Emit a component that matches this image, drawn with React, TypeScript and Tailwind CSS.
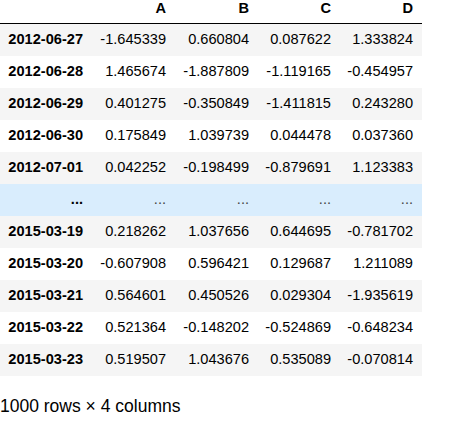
import React from "react";

const rows: [string, string[]][] = [
  ["2012-06-27", ["-1.645339", "0.660804", "0.087622", "1.333824"]],
  ["2012-06-28", ["1.465674", "-1.887809", "-1.119165", "-0.454957"]],
  ["2012-06-29", ["0.401275", "-0.350849", "-1.411815", "0.243280"]],
  ["2012-06-30", ["0.175849", "1.039739", "0.044478", "0.037360"]],
  ["2012-07-01", ["0.042252", "-0.198499", "-0.879691", "1.123383"]],
  ["...", ["...", "...", "...", "..."]],
  ["2015-03-19", ["0.218262", "1.037656", "0.644695", "-0.781702"]],
  ["2015-03-20", ["-0.607908", "0.596421", "0.129687", "1.211089"]],
  ["2015-03-21", ["0.564601", "0.450526", "0.029304", "-1.935619"]],
  ["2015-03-22", ["0.521364", "-0.148202", "-0.524869", "-0.648234"]],
  ["2015-03-23", ["0.519507", "1.043676", "0.535089", "-0.070814"]],
];

export default function App() {
  return (
    <div
      className="w-[454px] h-[424px] bg-white text-black text-[14.6px] overflow-hidden"
      style={{ fontFamily: '"Liberation Sans", Arial, sans-serif' }}
    >
      <table className="table-fixed border-collapse w-[422px]">
        <colgroup>
          <col className="w-[92px]" />
          <col className="w-[83px]" />
          <col className="w-[83px]" />
          <col className="w-[82px]" />
          <col className="w-[82px]" />
        </colgroup>
        <thead>
          <tr className="border-b border-black">
            <th className="h-[23px] p-0 pr-[9px] pb-[6px] leading-[17px] align-bottom text-right font-bold"></th>
            {["A", "B", "C", "D"].map((h) => (
              <th
                key={h}
                className="h-[23px] p-0 pr-[9px] pb-[6px] leading-[17px] align-bottom text-right font-bold"
              >
                {h}
              </th>
            ))}
          </tr>
        </thead>
        <tbody>
          {rows.map(([idx, vals], i) => {
            const bg =
              idx === "..."
                ? "bg-[#d9edfd]"
                : i % 2 === 0
                ? "bg-[#f5f5f5]"
                : "bg-white";
            return (
              <tr key={i} className={bg}>
                <th className="h-[32px] p-0 pr-[9px] leading-[17px] text-right font-bold align-middle">
                  {idx}
                </th>
                {vals.map((v, j) => (
                  <td
                    key={j}
                    className={
                      "h-[32px] p-0 pr-[9px] leading-[17px] text-right align-middle " +
                      (idx === "..." ? "text-[#444]" : "")
                    }
                  >
                    {v}
                  </td>
                ))}
              </tr>
            );
          })}
        </tbody>
      </table>
      <p className="mt-[20px] text-[17.5px] leading-[20px]">1000 rows × 4 columns</p>
    </div>
  );
}
